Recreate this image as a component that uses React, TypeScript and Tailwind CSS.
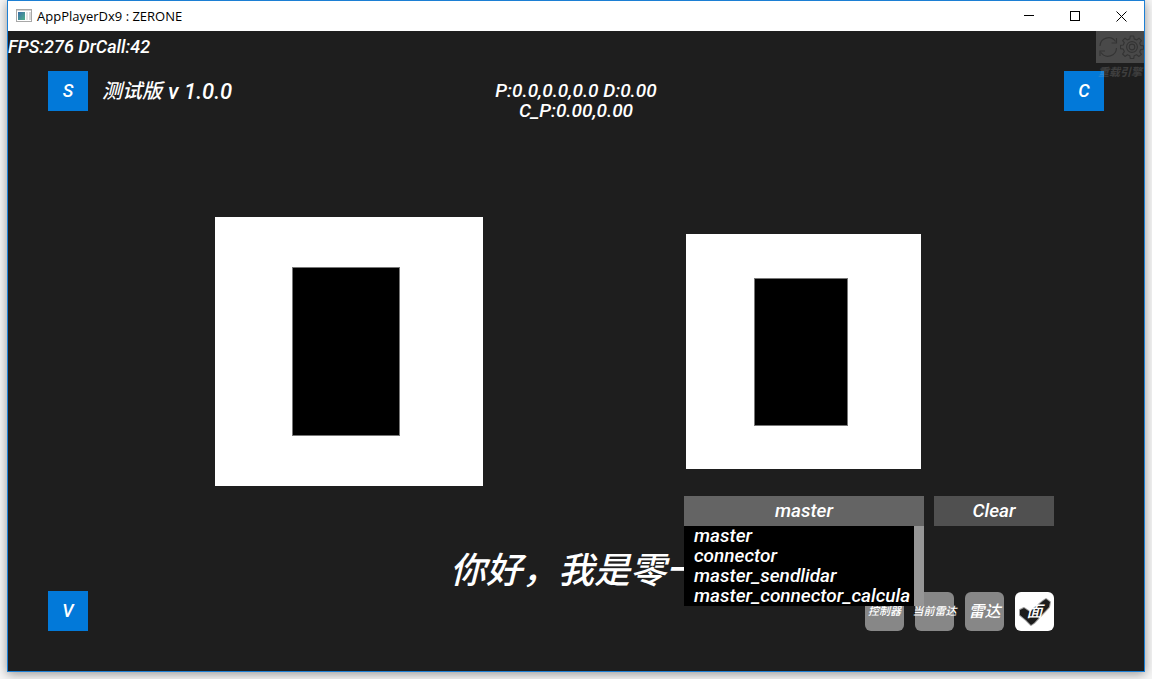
import { useState } from "react";

const modules = [
  "master",
  "connector",
  "master_sendlidar",
  "master_connector_calcula",
];

const tile =
  "flex size-10 shrink-0 items-center justify-center bg-[#0279d9] text-lg leading-5";

function AppIcon() {
  return (
    <svg width="16" height="14" viewBox="0 0 16 14" aria-hidden="true">
      <defs>
        <linearGradient id="pane" x1="0" y1="0" x2="1" y2="1">
          <stop offset="0" stopColor="#3a6ea8" />
          <stop offset="1" stopColor="#4fb08a" />
        </linearGradient>
      </defs>
      <rect x="0.5" y="0.5" width="15" height="12" fill="#fff" stroke="#a8a8a8" />
      <rect x="1" y="1" width="14" height="1" fill="#d4d4d4" />
      <rect x="2" y="3" width="7" height="8" fill="url(#pane)" />
      <rect x="10" y="3" width="2" height="8" fill="#e4e4e4" />
      <rect x="13" y="3" width="2" height="8" fill="#d8d8d8" />
    </svg>
  );
}

function TitleBar() {
  const control = "flex h-full w-[46px] items-center justify-center";
  return (
    <header className="flex h-[30px] items-center bg-white pl-2 text-black">
      <AppIcon />
      <h1 className="ml-[5px] flex-1 font-['Open_Sans','Noto_Sans',sans-serif] text-[13px] leading-5">
        AppPlayerDx9 : ZERONE
      </h1>
      <button className={control} aria-label="Minimize">
        <svg width="10" height="10" shapeRendering="crispEdges">
          <path d="M0 4.5H10" stroke="#000" />
        </svg>
      </button>
      <button className={control} aria-label="Maximize">
        <svg width="10" height="10" shapeRendering="crispEdges">
          <rect x="0.5" y="0.5" width="9" height="9" fill="none" stroke="#000" />
        </svg>
      </button>
      <button className={control} aria-label="Close">
        <svg width="11" height="11">
          <path d="M0.5 0.5L10.5 10.5M10.5 0.5L0.5 10.5" stroke="#000" />
        </svg>
      </button>
    </header>
  );
}

function GearIcon() {
  return (
    <svg width="24" height="24" viewBox="0 0 24 24" fill="none" stroke="#8a8a8a" strokeWidth="1.2" strokeLinejoin="round">
      <path d="M10.3 1h3.4l.5 2.9 2.4 1L19 3.2l2.4 2.4-1.7 2.4 1 2.4 2.8.4v3.3l-2.8.5-1 2.4 1.7 2.4L19 21.4l-2.4-1.7-2.4 1-.5 2.8h-3.4l-.5-2.8-2.4-1L5 21.4 2.6 19l1.7-2.4-1-2.4L.5 13.700v-3.3l2.800-.4 1-2.4L2.6 5.6 5 3.2l2.4 1.700 2.4-1z" />
      <circle cx="12" cy="12" r="5.4" />
      <circle cx="12" cy="12" r="2.8" />
    </svg>
  );
}

function ReloadIcon() {
  return (
    <svg width="24" height="24" viewBox="0 0 24 24" fill="none" stroke="#8a8a8a" strokeWidth="1.2">
      <path d="M4 11a8.500 8.500 0 0 1 15.500-4.500M20.500 3v5h-5M20.500 13a8.500 8.500 0 0 1-15.500 4.500M4 21v-5h5" />
    </svg>
  );
}

function EngineOverlay() {
  return (
    <button className="absolute top-0 right-0 z-10 w-12 opacity-20" aria-label="重载引擎">
      <span className="flex h-8 items-center bg-[#f4f4f4]">
        <ReloadIcon />
        <GearIcon />
      </span>
      <span className="block pt-[2px] text-center text-[11px] leading-4 font-bold whitespace-nowrap text-[#c0c0c0]">
        重载引擎
      </span>
    </button>
  );
}

function ModulePicker() {
  const [value, setValue] = useState("master");
  return (
    <div className="relative w-60">
      <select
        aria-label="Module"
        value={value}
        onChange={(e) => setValue(e.target.value)}
        className="h-[30px] w-full appearance-none bg-[#646464] text-center text-[19px] leading-5 italic"
      >
        {modules.map((m) => (
          <option key={m}>{m}</option>
        ))}
      </select>
      <div className="absolute inset-x-0 top-[30px] z-10 flex bg-black">
        <ul role="listbox" aria-label="Modules" className="min-w-0 flex-1 overflow-hidden pl-[10px]">
          {modules.map((m) => (
            <li
              key={m}
              role="option"
              aria-selected={m === value}
              onClick={() => setValue(m)}
              className="cursor-pointer text-[19px] leading-5 whitespace-nowrap"
            >
              {m}
            </li>
          ))}
        </ul>
        <div className="w-[10px] bg-[#969696]" />
      </div>
    </div>
  );
}

function Marker({ box, mark }: { box: string; mark: string }) {
  return (
    <div className={`bg-white ${box}`}>
      <div className={`border border-[#777] bg-black ${mark}`} />
    </div>
  );
}

const toggle =
  "relative flex size-[39px] items-center justify-center rounded-md leading-5 whitespace-nowrap";

export default function App() {
  return (
    <div className="flex min-h-screen flex-col bg-[#f6f6f6] px-[7px] pb-[7px]">
      <div className="flex flex-1 flex-col border border-[#1c7fd4] bg-[#1e1e1e] shadow-[0_2px_10px_rgba(0,0,0,0.4)]">
        <TitleBar />
        <main className="relative flex flex-1 flex-col font-['Roboto','Noto_Sans_CJK_SC',sans-serif] font-medium text-white italic">
          <EngineOverlay />
          <p className="h-10 pt-[6px] text-lg leading-5">FPS:276 DrCall:42</p>

          <div className="grid grid-cols-3 items-start px-10">
            <div className="flex items-center">
              <button className={tile}>S</button>
              <span className="pl-[14px] text-xl">测试版</span>
              <span className="pl-[6px] text-[22px]">v 1.0.0</span>
            </div>
            <p className="pt-[10px] text-center text-[19px] leading-5">
              P:0.0,0.0,0.0 D:0.00
              <br />
              C_P:0.00,0.00
            </p>
            <button className={`${tile} justify-self-end`}>C</button>
          </div>

          <div className="flex flex-1 items-center justify-between pt-[85px] pr-[223px] pl-[207px]">
            <Marker box="h-[269px] w-[268px] pt-[50px] pl-[77px]" mark="h-[169px] w-[108px]" />
            <Marker box="size-[235px] pt-[44px] pl-[68px]" mark="h-[148px] w-[94px]" />
          </div>

          <div className="flex justify-end gap-[10px] pr-[90px]">
            <ModulePicker />
            <button className="h-[30px] w-[120px] bg-[#505050] text-[19px] leading-5">Clear</button>
          </div>

          <p className="pt-[25px] text-center text-4xl">你好，我是零一</p>

          <div className="flex items-end justify-between pr-[90px] pb-10 pl-10">
            <button className={tile}>V</button>
            <div className="flex gap-[11px]">
              <button className={`${toggle} bg-[#878787] text-[11px]`}>控制器</button>
              <button className={`${toggle} bg-[#878787] text-[11px]`}>当前雷达</button>
              <button className={`${toggle} bg-[#878787] text-base`}>雷达</button>
              <button className={`${toggle} bg-white text-base`}>
                <svg className="absolute inset-0" width="39" height="39" viewBox="0 0 39 39" aria-hidden="true">
                  <path d="M5 18L9 16 15 20 28 9 31 7 35 10 34 15 19 31 16 33 11 28 5 23z" fill="#1c1c1c" stroke="#1c1c1c" strokeOpacity="0.4" strokeWidth="2" strokeLinejoin="round" />
                </svg>
                <span className="relative">面</span>
              </button>
            </div>
          </div>
        </main>
      </div>
    </div>
  );
}
